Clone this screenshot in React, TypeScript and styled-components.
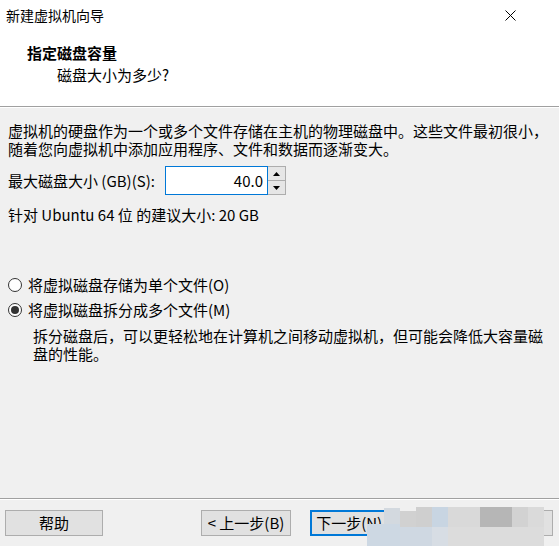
import React from "react";
import styled, { createGlobalStyle } from "styled-components";

const Global = createGlobalStyle`
  html, body { margin: 0; padding: 0; }
  body {
    background: #f0f0f0;
    font-family: "Noto Sans CJK SC", "Noto Sans", sans-serif;
    font-size: 15px;
    color: #000;
  }
`;

const Window = styled.div`
  position: relative;
  width: 559px;
  height: 546px;
  display: flex;
  flex-direction: column;
  background: #f0f0f0;
  overflow: hidden;
`;

const TitleBar = styled.div`
  height: 30px;
  background: #fff;
  display: flex;
  align-items: center;
  justify-content: space-between;
  padding: 0 0 0 6px;
  font-size: 14px;
  line-height: 30px;
`;

const CloseBox = styled.div`
  width: 46px;
  height: 30px;
  display: flex;
  align-items: center;
  justify-content: center;
  margin-right: 26px;
`;

const Header = styled.div`
  background: #fff;
  height: 76px;
  padding-top: 13px;
  box-sizing: border-box;
`;

const HeaderTitle = styled.div`
  font-weight: bold;
  line-height: 20px;
  margin-left: 27px;
`;

const HeaderSub = styled.div`
  line-height: 20px;
  margin-left: 57px;
  margin-top: 2px;
`;

const Separator = styled.div`
  height: 1px;
  background: #a0a0a0;
  border-bottom: 1px solid #ffffff;
`;

const Body = styled.div`
  flex: 1;
  display: flex;
  flex-direction: column;
  padding: 14px 0 0 8px;
`;

const Para = styled.div<{ $indent?: number; $top?: number }>`
  line-height: 18px;
  white-space: nowrap;
  margin-left: ${(p) => p.$indent ?? 0}px;
  margin-top: ${(p) => p.$top ?? 0}px;
`;

const SizeRow = styled.div`
  display: flex;
  align-items: center;
  margin-top: 8px;
  height: 29px;
`;

const SizeLabel = styled.span`
  width: 157px;
  white-space: nowrap;
`;

const NumberBox = styled.div`
  width: 103px;
  height: 29px;
  box-sizing: border-box;
  border: 1px solid #0078d7;
  background: #fff;
  display: flex;
  align-items: center;
  justify-content: flex-end;
  padding-right: 4px;
`;

const Spin = styled.div`
  display: flex;
  flex-direction: column;
  width: 18px;
  height: 29px;
  box-sizing: border-box;
  border: 1px solid #adadad;
  border-left: none;
  background: #e6e6e6;
`;

const SpinButton = styled.div<{ $down?: boolean }>`
  flex: 1;
  display: flex;
  align-items: center;
  justify-content: center;
  border-top: ${(p) => (p.$down ? "1px solid #adadad" : "none")};
`;

const RadioRow = styled.label<{ $top: number }>`
  display: flex;
  align-items: center;
  gap: 6px;
  height: 18px;
  line-height: 18px;
  margin-top: ${(p) => p.$top}px;
  white-space: nowrap;
`;

const RadioCircle = styled.span<{ $checked?: boolean }>`
  width: 14px;
  height: 14px;
  box-sizing: border-box;
  border-radius: 50%;
  border: 1px solid #333;
  background: #fff;
  display: flex;
  align-items: center;
  justify-content: center;
  &::after {
    content: "";
    display: ${(p) => (p.$checked ? "block" : "none")};
    width: 8px;
    height: 8px;
    border-radius: 50%;
    background: #333;
  }
`;

const Footer = styled.div`
  display: flex;
  flex-direction: column;
  height: 48px;
`;

const FooterSep = styled.div`
  height: 1px;
  background: #a0a0a0;
  border-bottom: 1px solid #ffffff;
  margin-bottom: 10px;
`;

const ButtonRow = styled.div`
  display: flex;
  padding-left: 5px;
  height: 26px;
`;

const Button = styled.div<{ $w: number; $left: number; $focused?: boolean }>`
  width: ${(p) => p.$w}px;
  height: 26px;
  box-sizing: border-box;
  margin-left: ${(p) => p.$left}px;
  background: #e1e1e1;
  border: ${(p) => (p.$focused ? "2px solid #0078d7" : "1px solid #adadad")};
  display: flex;
  align-items: center;
  justify-content: center;
  line-height: 18px;
  white-space: nowrap;
`;

const Mosaic = styled.div`
  position: absolute;
  left: 0;
  top: 0;
  width: 559px;
  height: 546px;
  pointer-events: none;
`;

const Tile = styled.div`
  position: absolute;
`;

const tiles = [
  { x: 367, y: 524, w: 33, h: 22, c: "#cdd8e3" },
  { x: 384, y: 508, w: 16, h: 16, c: "#d3d9df" },
  { x: 400, y: 511, w: 16, h: 16, c: "#d1d1d1" },
  { x: 416, y: 507, w: 16, h: 20, c: "#cfcfcf" },
  { x: 432, y: 507, w: 16, h: 20, c: "#c8d5e2" },
  { x: 448, y: 507, w: 32, h: 20, c: "#d9d9d9" },
  { x: 480, y: 507, w: 32, h: 20, c: "#b6b6b6" },
  { x: 512, y: 507, w: 16, h: 20, c: "#d2d2d2" },
  { x: 528, y: 507, w: 16, h: 20, c: "#dadada" },
  { x: 400, y: 527, w: 32, h: 19, c: "#cfd8e2" },
  { x: 432, y: 527, w: 16, h: 19, c: "#d7dde4" },
  { x: 448, y: 527, w: 96, h: 19, c: "#dcdcdc" },
];

export default function App() {
  return (
    <>
      <Global />
      <Window>
        <TitleBar>
          <span>新建虚拟机向导</span>
          <CloseBox>
            <svg width="11" height="11" viewBox="0 0 11 11">
              <path d="M0.5 0.5 L10.5 10.5 M10.5 0.5 L0.5 10.5" stroke="#000" strokeWidth="1" />
            </svg>
          </CloseBox>
        </TitleBar>
        <Header>
          <HeaderTitle>指定磁盘容量</HeaderTitle>
          <HeaderSub>磁盘大小为多少?</HeaderSub>
        </Header>
        <Separator />
        <Body>
          <Para>
            虚拟机的硬盘作为一个或多个文件存储在主机的物理磁盘中。这些文件最初很小，
            <br />
            随着您向虚拟机中添加应用程序、文件和数据而逐渐变大。
          </Para>
          <SizeRow>
            <SizeLabel>最大磁盘大小 (GB)(S):</SizeLabel>
            <NumberBox>40.0</NumberBox>
            <Spin>
              <SpinButton>
                <svg width="7" height="4" viewBox="0 0 7 4">
                  <path d="M3.5 0 L7 4 L0 4 Z" fill="#000" />
                </svg>
              </SpinButton>
              <SpinButton $down>
                <svg width="7" height="4" viewBox="0 0 7 4">
                  <path d="M0 0 L7 0 L3.5 4 Z" fill="#000" />
                </svg>
              </SpinButton>
            </Spin>
          </SizeRow>
          <Para $top={11}>针对 Ubuntu 64 位 的建议大小: 20 GB</Para>
          <RadioRow $top={52}>
            <RadioCircle />
            <span>将虚拟磁盘存储为单个文件(O)</span>
          </RadioRow>
          <RadioRow $top={7}>
            <RadioCircle $checked />
            <span>将虚拟磁盘拆分成多个文件(M)</span>
          </RadioRow>
          <Para $indent={25} $top={8}>
            拆分磁盘后，可以更轻松地在计算机之间移动虚拟机，但可能会降低大容量磁
            <br />
            盘的性能。
          </Para>
        </Body>
        <Footer>
          <FooterSep />
          <ButtonRow>
            <Button $w={98} $left={0}>帮助</Button>
            <Button $w={90} $left={98}>&lt; 上一步(B)</Button>
            <Button $w={90} $left={19} $focused>下一步(N) &gt;</Button>
            <Button $w={90} $left={63}>取消</Button>
          </ButtonRow>
        </Footer>
        <Mosaic>
          {tiles.map((t, i) => (
            <Tile key={i} style={{ left: t.x, top: t.y, width: t.w, height: t.h, background: t.c }} />
          ))}
        </Mosaic>
      </Window>
    </>
  );
}
